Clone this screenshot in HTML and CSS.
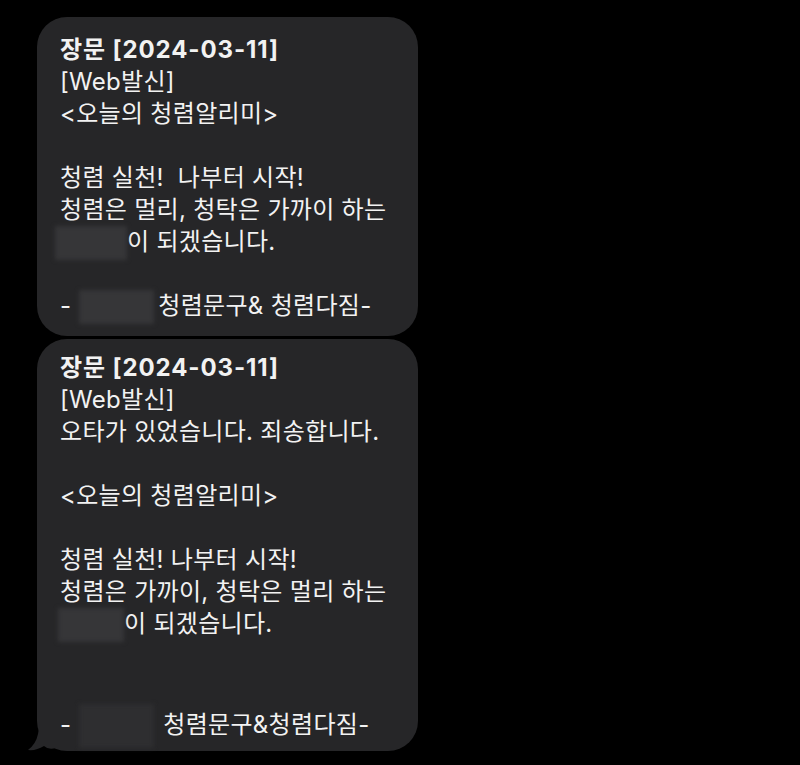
FILE: index.html
```html
<!DOCTYPE html>
<html lang="ko">
<head>
<meta charset="utf-8">
<link rel="stylesheet" href="styles.css">
</head>
<body>
<div class="thread">
  <div class="bubble b1">
    <div class="line title">장문 [2024-03-11]</div>
    <div class="line">[Web발신]</div>
    <div class="line">&lt;오늘의 청렴알리미&gt;</div>
    <div class="line blank"></div>
    <div class="line">청렴 실천!&nbsp; 나부터 시작!</div>
    <div class="line">청렴은 멀리, 청탁은 가까이 하는</div>
    <div class="line"><span class="redact r1"></span>이 되겠습니다.</div>
    <div class="line blank"></div>
    <div class="line">-<span class="redact r2"></span>청렴문구&amp; 청렴다짐-</div>
  </div>
  <div class="bubble b2">
    <div class="line title">장문 [2024-03-11]</div>
    <div class="line">[Web발신]</div>
    <div class="line">오타가 있었습니다. 죄송합니다.</div>
    <div class="line blank"></div>
    <div class="line">&lt;오늘의 청렴알리미&gt;</div>
    <div class="line blank"></div>
    <div class="line">청렴 실천! 나부터 시작!</div>
    <div class="line">청렴은 가까이, 청탁은 멀리 하는</div>
    <div class="line"><span class="redact r3"></span>이 되겠습니다.</div>
    <div class="line blank"></div>
    <div class="line blank"></div>
    <div class="line">-<span class="redact r4"></span>청렴문구&amp;청렴다짐-</div>
    <svg class="tail" width="30" height="30" viewBox="0 0 30 30">
      <path d="M12 0 L28 0 L28 26 Q20 28 16 24 Q8 29 0 28 Q8 22 10 12 Z" fill="#262628"/>
    </svg>
  </div>
</div>
</body>
</html>
```
FILE: styles.css
```css
html, body {
  margin: 0;
  padding: 0;
  background: #000;
}
body {
  width: 800px;
  height: 765px;
  overflow: hidden;
  font-family: "Inter", "Noto Sans CJK KR", "Noto Sans", sans-serif;
  color: #f2f2f2;
}
.thread {
  display: flex;
  flex-direction: column;
  gap: 3px;
  padding: 17px 0 0 37px;
}
.bubble {
  position: relative;
  width: 381px;
  box-sizing: border-box;
  background: #262628;
  border-radius: 30px;
  padding: 17px 10px 14px 23px;
}
.b2 {
  padding-top: 13px;
  padding-bottom: 15px;
}
.line {
  font-size: 24px;
  line-height: 32px;
  height: 32px;
  white-space: nowrap;
  letter-spacing: 0.3px;
}
.title {
  font-weight: 700;
  letter-spacing: 0.9px;
}
.redact {
  display: inline-block;
  vertical-align: middle;
  background: #363638;
  filter: blur(2px);
  height: 34px;
}
.r1 { width: 72px; margin-left: -5px; margin-right: 0; }
.r2 { width: 75px; margin-left: 8px; margin-right: 4px; }
.r3 { width: 66px; margin-left: -2px; }
.r4 { width: 75px; margin-left: 8px; margin-right: 9px; background: #2e2e30; height: 44px; }
.tail {
  position: absolute;
  left: -9px;
  bottom: -1px;
}
```
